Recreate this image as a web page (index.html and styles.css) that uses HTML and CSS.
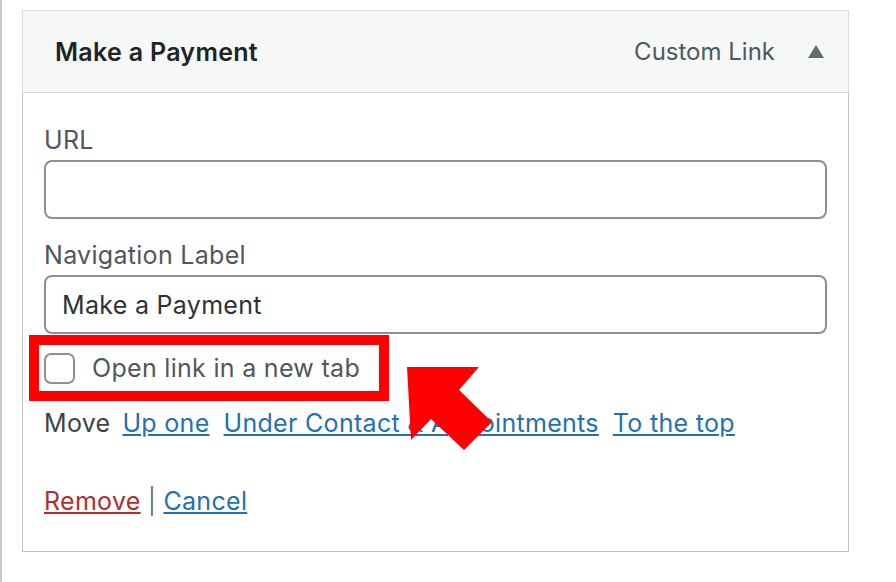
FILE: index.html
```html
<!DOCTYPE html>
<html lang="en">
<head>
    <meta charset="UTF-8">
    <meta name="viewport" content="width=device-width, initial-scale=1.0">
    <title>Make a Payment</title>
    <link rel="stylesheet" href="styles.css">
</head>
<body>
    <div class="page">
        <div class="menu-item">
            <!-- Item bar -->
            <div class="item-bar">
                <span class="item-title">Make a Payment</span>
                <span class="item-controls">
                    <span class="item-type">Custom Link</span>
                    <svg class="item-toggle" width="16" height="13" viewBox="0 0 16 13">
                        <polygon points="8,0 16,13 0,13" fill="#646970"/>
                    </svg>
                </span>
            </div>

            <!-- Item settings -->
            <div class="item-settings">
                <div class="field">
                    <label for="url">URL</label>
                    <input type="text" id="url" name="url">
                </div>

                <div class="field field-last">
                    <label for="navLabel">Navigation Label</label>
                    <input type="text" id="navLabel" name="navLabel" value="Make a Payment">
                </div>

                <label class="new-tab" for="newTab">
                    <input type="checkbox" id="newTab" name="newTab">
                    <span>Open link in a new tab</span>
                </label>

                <div class="move-row">
                    <span>Move</span>
                    <a href="#">Up one</a>
                    <a href="#">Under Contact &amp; Appointments</a>
                    <a href="#">To the top</a>
                </div>

                <div class="actions">
                    <a href="#" class="remove">Remove</a> <span class="sep">|</span> <a href="#">Cancel</a>
                </div>
            </div>
        </div>

        <!-- Annotation arrow -->
        <svg class="arrow" width="100" height="100" viewBox="400 360 100 100">
            <polygon points="405,367 477,367 457,390 490,422 462,450 429,419 409,440" fill="#ff0000"/>
        </svg>
    </div>
</body>
</html>
```

FILE: styles.css
```css
body {
    margin: 0;
    background-color: #fff;
    font-family: Inter, "Noto Sans", sans-serif;
    font-size: 25px;
    letter-spacing: 0.3px;
    color: #3c434a;
}
.page {
    position: relative;
    height: 582px;
    box-sizing: border-box;
    border-left: 2px solid #c8c9cc;
    padding: 10px 0 0 20px;
}
.menu-item {
    width: 827px;
}
.item-bar {
    display: flex;
    align-items: center;
    justify-content: space-between;
    height: 81px;
    padding: 0 24px 0 32px;
    background-color: #f6f7f7;
    border: 1px solid #dcdcde;
}
.item-title {
    font-weight: 600;
    color: #1d2327;
}
.item-controls {
    display: flex;
    align-items: center;
}
.item-type {
    font-size: 24px;
    letter-spacing: 0;
    color: #50575e;
    margin-right: 33px;
}
.item-toggle {
    display: block;
}
.item-settings {
    border: 1px solid #c3c4c7;
    border-top: none;
    padding: 32px 21px 35px 21px;
}
.field {
    margin-bottom: 21px;
}
.field-last {
    margin-bottom: 0;
}
.field label {
    display: block;
    line-height: 30px;
    margin-bottom: 5px;
    color: #50575e;
}
.field input {
    display: block;
    box-sizing: border-box;
    width: 100%;
    height: 59px;
    padding: 0 16px;
    border: 2px solid #8c8f94;
    border-radius: 8px;
    font-family: inherit;
    font-size: 25px;
    letter-spacing: 0.3px;
    color: #2c3338;
    outline: none;
}
.new-tab {
    display: inline-flex;
    align-items: center;
    height: 46px;
    margin: 1px 0 0 -15px;
    padding: 0 19px 0 5px;
    border: 10px solid #ff0000;
    color: #50575e;
    line-height: 30px;
}
.new-tab input {
    appearance: none;
    margin: 0 17px 0 0;
    width: 31px;
    height: 31px;
    border: 2px solid #8c8f94;
    border-radius: 7px;
    background-color: #fff;
}
.move-row {
    display: flex;
    gap: 12px;
    margin-top: 7px;
    line-height: 30px;
    color: #3c434a;
}
.move-row a + a {
    margin-left: 2px;
}
a {
    color: #2271b1;
}
.actions {
    margin-top: 48px;
    line-height: 30px;
}
.actions .remove {
    color: #b32d2e;
}
.sep {
    color: #50575e;
    font-weight: 300;
}
.arrow {
    position: absolute;
    left: 400px;
    top: 360px;
}
```
